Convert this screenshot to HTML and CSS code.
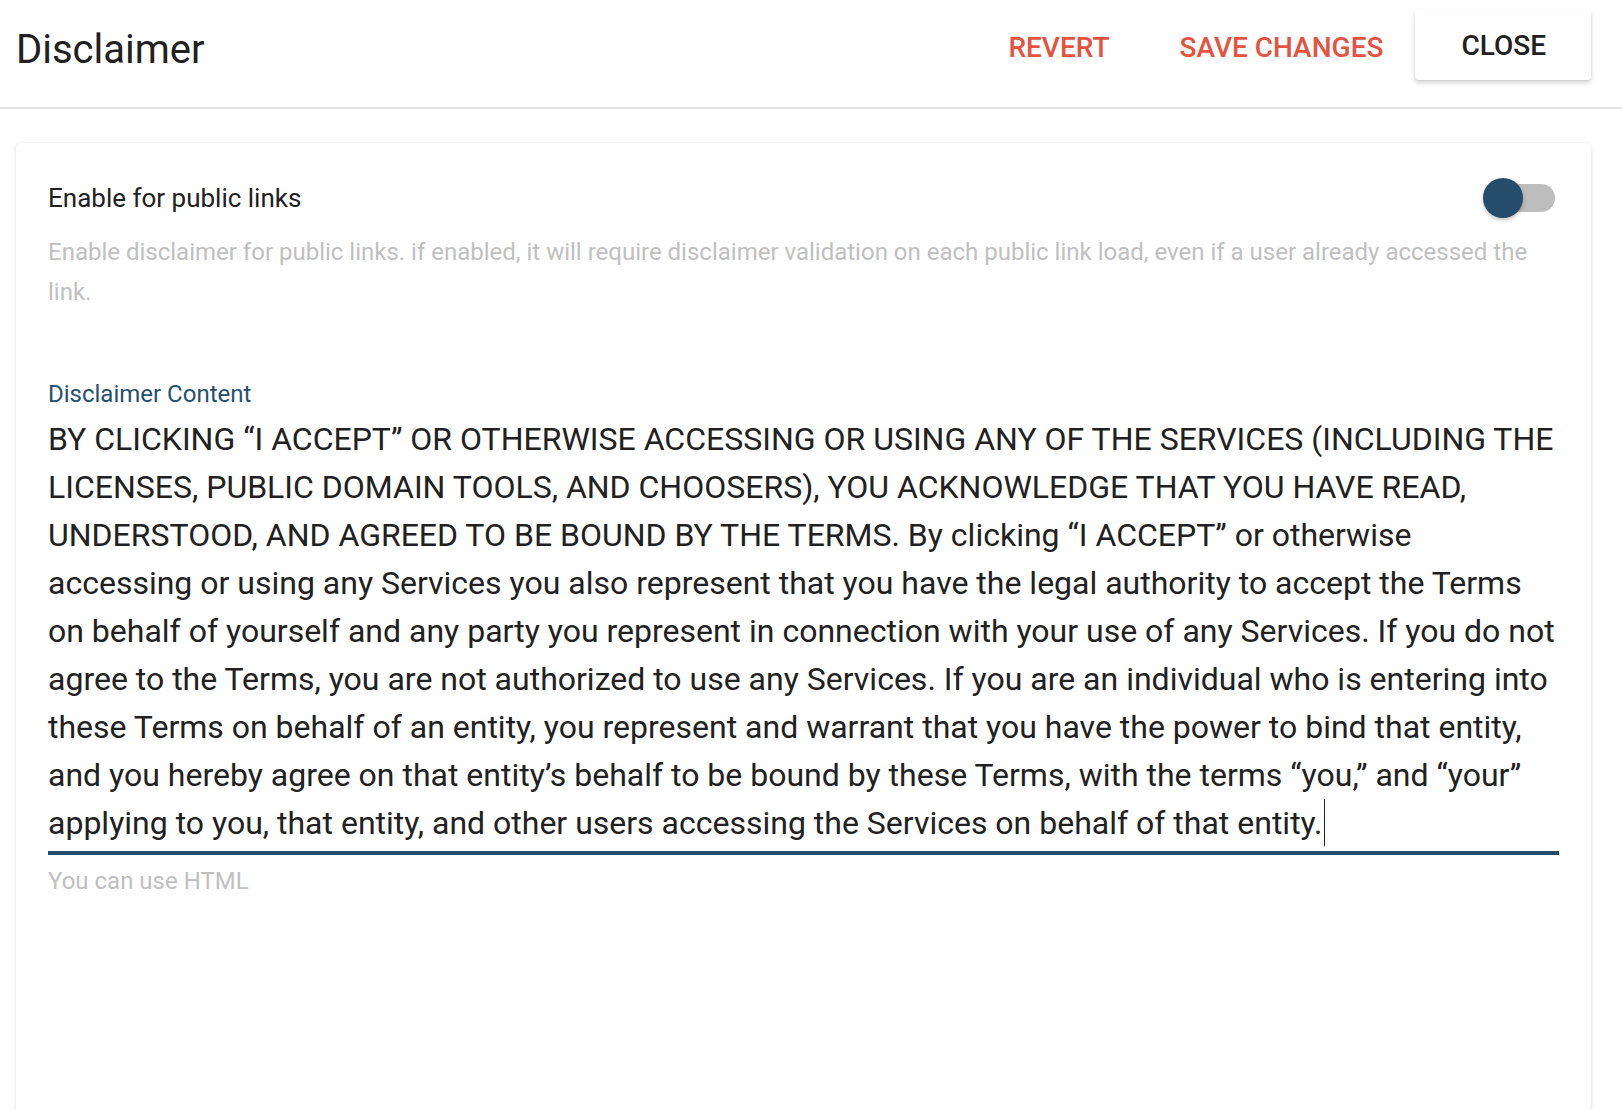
FILE: index.html
```html
<!DOCTYPE html>
<html lang="en">
<head>
<meta charset="utf-8">
<title>Disclaimer</title>
<link rel="stylesheet" href="styles.css">
</head>
<body>
<header class="topbar">
  <h1 class="title">Disclaimer</h1>
  <div class="actions">
    <button class="btn btn-text">REVERT</button>
    <button class="btn btn-text">SAVE CHANGES</button>
    <button class="btn btn-raised">CLOSE</button>
  </div>
</header>
<main class="content">
  <section class="card">
    <div class="setting-row">
      <span class="setting-label">Enable for public links</span>
      <span class="switch"><span class="switch-track"></span><span class="switch-thumb"></span></span>
    </div>
    <p class="hint">Enable disclaimer for public links. if enabled, it will require disclaimer validation on each public link load, even if a user already accessed the link.</p>
    <div class="field">
      <label class="field-label">Disclaimer Content</label>
      <div class="field-input">BY CLICKING “I ACCEPT” OR OTHERWISE ACCESSING OR USING ANY OF THE SERVICES (INCLUDING THE LICENSES, PUBLIC DOMAIN TOOLS, AND CHOOSERS), YOU ACKNOWLEDGE THAT YOU HAVE READ, UNDERSTOOD, AND AGREED TO BE BOUND BY THE TERMS. By clicking “I ACCEPT” or otherwise accessing or using any Services you also represent that you have the legal authority to accept the Terms on behalf of yourself and any party you represent in connection with your use of any Services. If you do not agree to the Terms, you are not authorized to use any Services. If you are an individual who is entering into these Terms on behalf of an entity, you represent and warrant that you have the power to bind that entity, and you hereby agree on that entity’s behalf to be bound by these Terms, with the terms “you,” and “your” applying to you, that entity, and other users accessing the Services on behalf of that entity.<span class="caret"></span></div>
      <div class="field-help">You can use HTML</div>
    </div>
  </section>
</main>
</body>
</html>
```
FILE: styles.css
```css
* { box-sizing: border-box; }
html, body { margin: 0; padding: 0; background: #ffffff; }
body {
  font-family: Roboto, "Liberation Sans", Arial, sans-serif;
  color: #212121;
  width: 1622px;
  height: 1110px;
  overflow: hidden;
}
.topbar {
  display: flex;
  align-items: flex-start;
  justify-content: space-between;
  height: 109px;
  padding: 9px 31px 0 16px;
  border-bottom: 2px solid #e0e0e0;
}
.title {
  margin: 21px 0 0 0;
  font-size: 40px;
  line-height: 40px;
  font-weight: 400;
  color: #212121;
}
.actions {
  display: flex;
  align-items: flex-start;
}
.btn {
  font-family: Roboto, "Liberation Sans", Arial, sans-serif;
  font-size: 28px;
  font-weight: 500;
  border: none;
  background: transparent;
  margin: 0;
  cursor: pointer;
}
.btn-text {
  color: #e5533f;
  padding: 3px 32px 0 38px;
  line-height: 71px;
}
.btn-raised {
  color: #212121;
  background: #ffffff;
  height: 71px;
  padding: 2px 45px 0 46px;
  line-height: 69px;
  border-radius: 4px;
  box-shadow: 0 3px 5px rgba(0,0,0,0.16), 0 1px 2px rgba(0,0,0,0.08);
}
.content {
  padding: 34px 31px 0 16px;
}
.card {
  background: #ffffff;
  border-radius: 5px;
  box-shadow: 0 1px 4px rgba(0,0,0,0.14), 0 0 1px rgba(0,0,0,0.08);
  padding: 35px 32px 240px 32px;
  min-height: 1000px;
}
.setting-row {
  display: flex;
  align-items: center;
  justify-content: space-between;
  height: 40px;
}
.setting-label {
  font-size: 26px;
  line-height: 40px;
  color: #212121;
}
.switch {
  position: relative;
  display: flex;
  align-items: center;
  width: 72px;
  height: 40px;
  margin-top: -1px;
  margin-right: 4px;
}
.switch-track {
  display: block;
  margin-left: 4px;
  width: 68px;
  height: 28px;
  border-radius: 14px;
  background: #bdbdbd;
}
.switch-thumb {
  position: absolute;
  left: 0;
  top: 0;
  width: 40px;
  height: 40px;
  border-radius: 50%;
  background: #254d6b;
  box-shadow: 0 2px 4px rgba(0,0,0,0.25);
}
.hint {
  margin: 15px 0 0 0;
  font-size: 24px;
  line-height: 39.5px;
  color: #c0c0c0;
}
.field {
  margin-top: 67px;
}
.field-label {
  display: block;
  font-size: 24px;
  line-height: 30px;
  color: #25506f;
}
.field-input {
  margin-top: 6px;
  font-size: 32px;
  line-height: 48px;
  color: #212121;
  padding-bottom: 4px;
  border-bottom: 4px solid #254d6b;
}
.caret {
  display: inline-block;
  width: 1px;
  height: 47px;
  background: #212121;
  vertical-align: -12px;
  margin-left: 1px;
}
.field-help {
  margin-top: 11px;
  font-size: 24px;
  line-height: 30px;
  color: #c0c0c0;
}
```
